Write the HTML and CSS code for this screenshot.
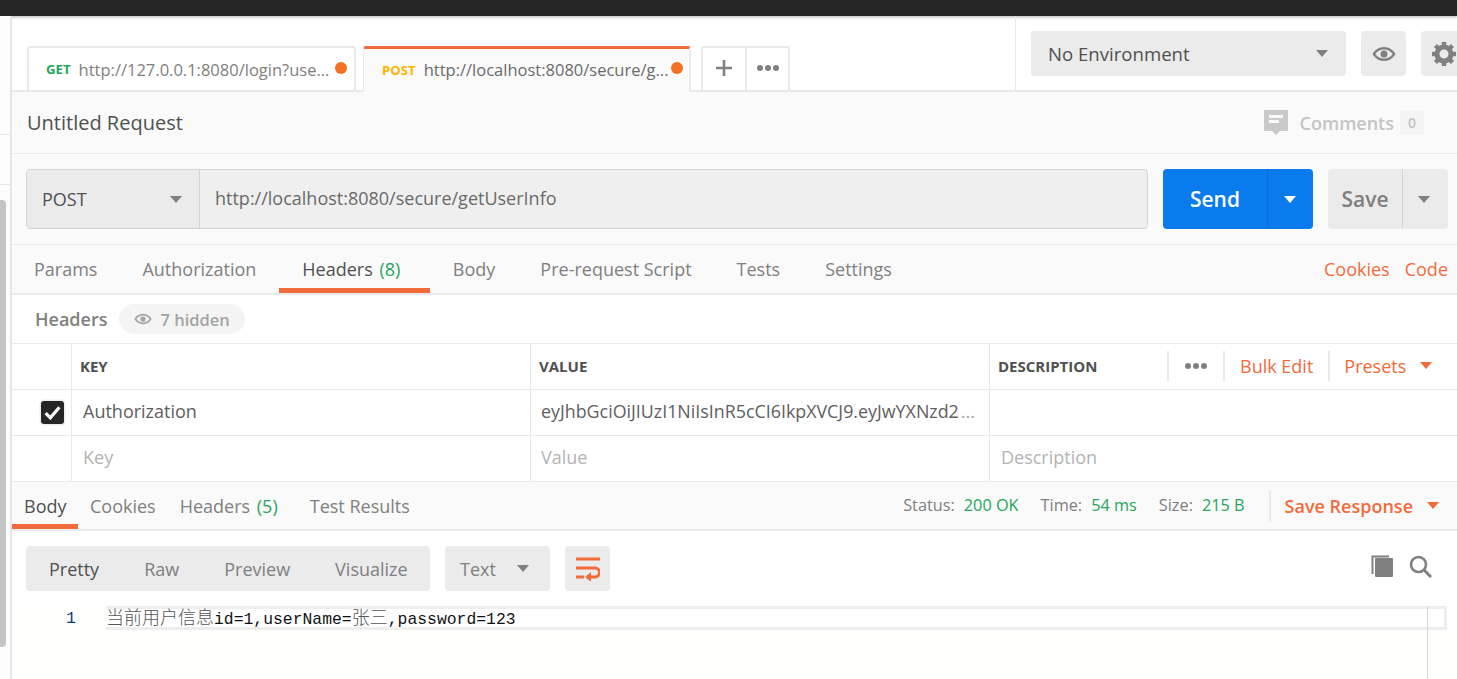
FILE: index.html
```html
<!DOCTYPE html>
<html lang="zh">
<head>
<meta charset="utf-8">
<title>Postman</title>
<link rel="stylesheet" href="styles.css">
</head>
<body>
<div class="topbar"></div>
<div class="app">
  <aside class="sidebar">
    <div class="side-a"></div>
    <div class="side-b"></div>
    <div class="thumb"></div>
  </aside>
  <main class="main">
    <section class="tabbar">
      <div class="tabs">
        <div class="tab">
          <span class="verb get">GET</span><span class="tab-url">http://127.0.0.1:8080/login?use...</span><i class="dot"></i>
        </div>
        <div class="tab active">
          <span class="verb post">POST</span><span class="tab-url">http://localhost:8080/secure/g...</span><i class="dot"></i>
        </div>
        <div class="tab-tools">
          <div class="tool plus"><svg width="20" height="20" viewBox="0 0 20 20"><path d="M10 2v16M2 10h16" stroke="#808080" stroke-width="2.6"/></svg></div>
          <div class="tool"><svg class="dots" width="24" height="8" viewBox="0 0 24 8"><circle cx="4" cy="4" r="3"/><circle cx="12" cy="4" r="3"/><circle cx="20" cy="4" r="3"/></svg></div>
        </div>
      </div>
      <div class="env">
        <div class="env-select"><span>No Environment</span><i class="caret"></i></div>
        <div class="env-btn"><svg width="24" height="16" viewBox="0 0 24 16"><path fill="#808080" fill-rule="evenodd" d="M12 1C7 1 2.800 3.800 0.500 8 2.800 12.200 7 15 12 15s9.200-2.800 11.500-7C21.200 3.800 17 1 12 1zm0 2.400c3.600 0 6.800 1.800 8.800 4.600-2 2.800-5.200 4.600-8.800 4.600S5.200 10.800 3.200 8c2-2.800 5.200-4.600 8.800-4.600zM12 4.500a3.500 3.500 0 1 0 0 7 3.500 3.500 0 0 0 0-7z"/></svg></div>
        <div class="env-btn"><svg width="26" height="26" viewBox="0 0 26 26"><circle cx="13" cy="13" r="7" fill="none" stroke="#808080" stroke-width="5"/><path stroke="#808080" stroke-width="4.500" d="M13 1v5M13 20v5M1 13h5M20 13h5M4.500 4.500l3.500 3.500M18 18l3.500 3.500M4.500 21.500L8 18M18 8l3.500-3.500"/></svg></div>
      </div>
    </section>

    <section class="title-row">
      <h1>Untitled Request</h1>
      <div class="comments">
        <svg width="24" height="25" viewBox="0 0 24 25"><path fill="#c9c9c9" d="M1 0h22a1 1 0 0 1 1 1v19a1 1 0 0 1-1 1h-7l-4 4-4-4H1a1 1 0 0 1-1-1V1a1 1 0 0 1 1-1z"/><path fill="#fafafa" d="M5 5h14v3H5zM5 10h10v3H5z"/></svg>
        <span class="comments-label">Comments</span><span class="count">0</span>
      </div>
    </section>

    <section class="url-row">
      <div class="url-box">
        <div class="method"><span>POST</span><i class="caret"></i></div>
        <div class="url">http://localhost:8080/secure/getUserInfo</div>
      </div>
      <div class="send"><span class="send-label">Send</span><span class="send-arrow"><i class="caret white"></i></span></div>
      <div class="save"><span class="save-label">Save</span><span class="save-arrow"><i class="caret"></i></span></div>
    </section>

    <nav class="req-tabs">
      <span class="rt first">Params</span>
      <span class="rt">Authorization</span>
      <span class="rt on">Headers <b class="ok count-tag">(8)</b></span>
      <span class="rt">Body</span>
      <span class="rt">Pre-request Script</span>
      <span class="rt">Tests</span>
      <span class="rt">Settings</span>
      <span class="links"><span>Cookies</span><span>Code</span></span>
    </nav>

    <section class="hdr-row">
      <span class="hdr-title">Headers</span>
      <span class="pill"><svg width="18" height="12" viewBox="0 0 24 16"><path fill="#a3a3a3" fill-rule="evenodd" d="M12 1C7 1 2.800 3.800 0.500 8 2.800 12.200 7 15 12 15s9.200-2.800 11.500-7C21.200 3.800 17 1 12 1zm0 2.400c3.600 0 6.800 1.800 8.800 4.600-2 2.800-5.200 4.600-8.800 4.600S5.200 10.800 3.200 8c2-2.800 5.200-4.600 8.800-4.600zM12 4.500a3.500 3.500 0 1 0 0 7 3.500 3.500 0 0 0 0-7z"/></svg>7 hidden</span>
    </section>

    <section class="table">
      <div class="row head">
        <div class="cell chk"></div>
        <div class="cell">KEY</div>
        <div class="cell">VALUE</div>
        <div class="cell desc-head">
          <span class="desc-label">DESCRIPTION</span>
          <span class="head-tools">
            <span class="ht first"><svg class="dots" width="24" height="8" viewBox="0 0 24 8"><circle cx="4" cy="4" r="3"/><circle cx="12" cy="4" r="3"/><circle cx="20" cy="4" r="3"/></svg></span>
            <span class="ht link">Bulk Edit</span>
            <span class="ht link">Presets<i class="caret orange"></i></span>
          </span>
        </div>
      </div>
      <div class="row body-row">
        <div class="cell chk"><span class="checkbox"><svg width="17" height="15" viewBox="0 0 16 14"><path d="M1.500 7.500l4.500 4.500L14.500 2" fill="none" stroke="#fff" stroke-width="3"/></svg></span></div>
        <div class="cell">Authorization</div>
        <div class="cell value"><span class="ell">eyJhbGciOiJIUzI1NiIsInR5cCI6IkpXVCJ9.eyJwYXNzd2</span><span class="more">...</span></div>
        <div class="cell"></div>
      </div>
      <div class="row body-row ph">
        <div class="cell chk"></div>
        <div class="cell">Key</div>
        <div class="cell value">Value</div>
        <div class="cell">Description</div>
      </div>
    </section>

    <nav class="res-tabs">
      <span class="rs on">Body</span>
      <span class="rs">Cookies</span>
      <span class="rs wide">Headers <b class="ok count-tag">(5)</b></span>
      <span class="rs">Test Results</span>
      <span class="stats">
        <span class="stat"><span>Status:</span><b class="ok">200 OK</b></span>
        <span class="stat"><span>Time:</span><b class="ok">54 ms</b></span>
        <span class="stat"><span>Size:</span><b class="ok">215 B</b></span>
      </span>
      <span class="save-res"><span>Save Response</span><i class="caret orange"></i></span>
    </nav>

    <section class="toolbar">
      <div class="modes">
        <span class="mode sel">Pretty</span><span class="mode">Raw</span><span class="mode">Preview</span><span class="mode">Visualize</span>
      </div>
      <div class="format"><span>Text</span><i class="caret"></i></div>
      <div class="wrap"><svg width="24" height="25" viewBox="0 0 24 25"><path fill="none" stroke="#f26b3a" stroke-width="3" d="M0 3h24M0 12h19a4 4 0 0 1 0 9h-7M0 21h8"/><path fill="#f26b3a" d="M15 16v10l-6-5z"/></svg></div>
      <div class="res-icons">
        <svg width="23" height="22" viewBox="0 0 23 22"><rect x="4" y="3" width="18" height="19" rx="1" fill="#808080"/><path fill="none" stroke="#808080" stroke-width="2" d="M1.500 19V1.500H18"/></svg>
        <svg width="23" height="23" viewBox="0 0 23 23"><circle cx="9.500" cy="9.500" r="7.500" fill="none" stroke="#808080" stroke-width="2.600"/><path d="M15 15l7 7" stroke="#808080" stroke-width="3"/></svg>
      </div>
    </section>

    <section class="code">
      <span class="gutter">1</span>
      <div class="line"><span class="cjk">当前用户信息</span>id=1,userName=<span class="cjk">张三</span>,password=123</div>
    </section>
  </main>
</div>
</body>
</html>
```
FILE: styles.css
```css
* { box-sizing: border-box; }
html, body { margin: 0; height: 100%; overflow: hidden; }
body {
  width: 1457px;
  height: 679px;
  background: #fff;
  color: #505050;
  font-family: "Open Sans", "Noto Sans", sans-serif;
  font-size: 18px;
}
.topbar { height: 16px; background: #262626; box-shadow: 0 1px 3px rgba(0,0,0,.3); position: relative; }
.app { display: flex; height: 663px; }
.sidebar { width: 12px; flex: none; background: #fcfcfc; border-right: 2px solid #e6e6e6; position: relative; }
.side-a { height: 119px; border-bottom: 1px solid #e6e6e6; }
.side-b { height: 50px; border-bottom: 1px solid #e6e6e6; }
.thumb { position: absolute; left: 0; top: 184px; width: 6px; height: 447px; background: #c4c4c4; border-radius: 0 4px 4px 0; }
.main { width: 1445px; flex: none; overflow: hidden; }

.caret { display: inline-block; width: 0; height: 0; border-left: 6px solid transparent; border-right: 6px solid transparent; border-top: 7.500px solid #808080; }
.caret.white { border-top-color: #fff; }
.caret.orange { border-top-color: #f26b3a; }
.ok { color: #26a55b; font-weight: 400; }
.count-tag { margin-left: 2px; }
.dots { fill: #808080; }

.tabbar { height: 76px; display: flex; border-bottom: 2px solid #e9e9e9; position: relative; }
.tabs { width: 1004px; flex: none; display: flex; align-items: flex-end; padding-left: 15px; border-right: 1px solid #e9e9e9; }
.tab { width: 329px; height: 44px; display: flex; align-items: center; padding: 0 7px 0 17px; border: 2px solid #e9e9e9; border-bottom: 0; border-radius: 3px 3px 0 0; background: #fff; margin-right: 7px; font-size: 16.500px; white-space: nowrap; }
.tab.active { width: 328px; height: 46px; margin-bottom: -2px; margin-right: 10px; padding: 0 6px 2px 18px; background: #fafafa; border-top: 3px solid #f26b3a; border-left: 1px solid #e9e9e9; position: relative; }
.verb { font-size: 13.200px; font-weight: 700; margin-right: 8px; }
.get { color: #26a55b; }
.post { color: #ffb400; }
.tab-url { flex: 1; color: #808080; overflow: hidden; }
.active .tab-url { color: #6a6a6a; }
.dot { width: 12px; height: 12px; border-radius: 50%; background: #f47023; flex: none; margin-bottom: 3px; }
.tab-tools { display: flex; height: 44px; border: 2px solid #e9e9e9; border-bottom: 0; border-radius: 3px 3px 0 0; }
.tool { width: 41px; display: flex; align-items: center; justify-content: center; padding-bottom: 2px; }
.tool.plus { width: 44px; border-right: 2px solid #e9e9e9; }
.env { flex: none; display: flex; gap: 15px; padding: 15px 0 0 15px; }
.env-select { width: 315px; height: 45px; background: #ebebeb; border-radius: 4px; display: flex; align-items: center; justify-content: space-between; padding: 0 18px 0 17px; font-weight: 500; font-size: 18.600px; color: #505050; }
.env-btn { width: 45px; height: 45px; flex: none; background: #ebebeb; border-radius: 4px; display: flex; align-items: center; justify-content: center; }

.title-row { height: 62px; background: #fafafa; border-bottom: 1px solid #e9e9e9; display: flex; align-items: center; justify-content: space-between; padding: 0 33px 0 15px; }
h1 { margin: 0; font-size: 20px; font-weight: 500; color: #505050; }
.comments { display: flex; align-items: center; color: #c4c4c4; font-weight: 600; }
.comments-label { margin-left: 12px; margin-right: 6px; }
.count { width: 24px; height: 24px; background: #f4f4f4; border-radius: 2px; font-size: 14px; display: flex; align-items: center; justify-content: center; }

.url-row { height: 91px; background: #fafafa; border-bottom: 1px solid #e9e9e9; padding: 15px 0 0 14px; display: flex; }
.url-box { width: 1122px; height: 60px; display: flex; border: 1px solid #d4d4d4; border-radius: 4px; background: #efefef; }
.method { width: 173px; flex: none; background: #ebebeb; border-right: 1px solid #d4d4d4; border-radius: 3px 0 0 3px; display: flex; align-items: center; justify-content: space-between; padding: 0 17px 0 15px; font-weight: 500; }
.url { padding: 0 15px; line-height: 56px; color: #6a6a6a; }
.send { margin-left: 15px; width: 150px; height: 60px; background: #097bed; color: #fff; border-radius: 4px; display: flex; font-size: 21px; font-weight: 600; }
.send-label { width: 105px; text-align: center; line-height: 60px; border-right: 1px solid #0a6ed0; }
.send-arrow { flex: 1; display: flex; align-items: center; justify-content: center; padding-right: 2px; }
.save { margin-left: 15px; width: 120px; height: 60px; background: #ebebeb; color: #808080; border-radius: 4px; display: flex; font-size: 21px; font-weight: 600; }
.save-label { width: 75px; text-align: center; line-height: 60px; border-right: 1px solid #d4d4d4; }
.save-arrow { flex: 1; display: flex; align-items: center; justify-content: center; padding-right: 4px; }

.req-tabs { height: 50px; background: #fafafa; border-bottom: 2px solid #e9e9e9; display: flex; position: relative; }
.rt { padding: 12px 22.500px 0; color: #808080; height: 48px; white-space: nowrap; }
.rt.first { padding-left: 22px; }
.rt.on { color: #505050; border-bottom: 5px solid #f26b3a; padding-left: 23.500px; padding-right: 30px; }
.links { margin-left: auto; display: flex; gap: 15px; color: #f26b3a; padding: 12px 9px 0 0; }

.hdr-row { height: 49px; border-bottom: 1px solid #e9e9e9; display: flex; align-items: center; padding-left: 23px; }
.hdr-title { font-weight: 600; color: #808080; }
.pill { margin-left: 12px; height: 30px; padding: 0 15px; background: #f4f4f4; border-radius: 15px; display: inline-flex; align-items: center; gap: 8px; color: #a3a3a3; font-weight: 600; font-size: 16.500px; }

.row { display: grid; grid-template-columns: 60px 459px 459px 1fr; border-bottom: 1px solid #e9e9e9; height: 46px; }
.cell { border-right: 1px solid #e9e9e9; display: flex; align-items: center; padding: 0 11px 4px; white-space: nowrap; overflow: hidden; color: #606060; }
.cell:last-child { border-right: 0; }
.cell.value { padding-left: 10px; }
.cell.chk { justify-content: flex-end; padding: 0 7px 0 0; }
.head .cell { font-size: 15px; font-weight: 700; color: #505050; padding: 0 0 2px 8px; }
.head .desc-head { padding-right: 0; overflow: visible; }
.desc-label { width: 169px; flex: none; }
.head-tools { display: flex; align-items: center; height: 30px; }
.ht { height: 30px; display: flex; align-items: center; border-left: 2px solid #e9e9e9; }
.ht.first { padding: 0 15px; }
.ht.link { color: #f26b3a; font-size: 18px; font-weight: 400; padding: 0 15px; }
.ht.link:last-child { padding-left: 14px; padding-right: 0; }
.ht .caret { margin-left: 14px; }
.checkbox { width: 23px; height: 23px; background: #262626; border-radius: 3px; box-shadow: 0 0 0 1.500px #eee; display: flex; align-items: center; justify-content: center; }
.ell { color: #606060; flex: none; font-size: 17.850px; }
.more { color: #a3a3a3; margin-left: 2px; }
.ph .cell { color: #b3b3b3; }

.res-tabs { height: 49px; background: #fafafa; border-bottom: 2px solid #e9e9e9; display: flex; position: relative; }
.rs { padding: 12px 12px 0; color: #808080; height: 47px; white-space: nowrap; }
.rs.wide { padding-right: 20px; }
.rs.on { color: #505050; border-bottom: 5px solid #f26b3a; margin-left: -1px; padding: 12px 11.500px 0 13px; }
.stats { margin-left: auto; display: flex; gap: 22px; padding-top: 12px; font-size: 16.300px; color: #808080; }
.stat { display: flex; gap: 9px; }
.save-res { margin-left: 24px; margin-top: 8px; height: 31px; display: flex; align-items: center; border-left: 2px solid #e9e9e9; padding: 0 18px 0 14px; color: #f26b3a; font-weight: 600; }
.save-res .caret { margin-left: 14px; }

.toolbar { display: flex; align-items: flex-start; padding: 15px 0 0 14px; height: 75px; }
.modes { width: 404px; height: 45px; background: #ebebeb; border-radius: 4px; display: flex; align-items: center; padding-left: 23px; gap: 45px; color: #808080; }
.mode.sel { color: #505050; }
.format { margin-left: 15px; width: 105px; height: 45px; background: #ebebeb; border-radius: 4px; display: flex; align-items: center; justify-content: space-between; padding: 0 21px 0 15px; color: #808080; }
.wrap { margin-left: 15px; width: 45px; height: 45px; background: #ebebeb; border-radius: 4px; display: flex; align-items: center; justify-content: center; }
.res-icons { margin-left: auto; display: flex; gap: 15px; padding: 9px 25px 0 0; }

.code { display: flex; position: relative; height: 73px; background: #fffffd; }
.gutter { width: 94px; flex: none; padding-left: 54px; font-family: "Liberation Mono", monospace; font-size: 16.500px; color: #0a3a86; line-height: 26px; }
.line { width: 1341px; height: 24px; border: 3px solid #eee; border-left: 0; font-family: "Liberation Mono", "Noto Sans CJK SC", monospace; font-size: 16.400px; line-height: 14px; color: #111; white-space: nowrap; background: #fff; position: relative; }
.line::after { content: ""; position: absolute; left: 1321px; top: -3px; bottom: -52px; width: 1px; background: #d4d4d4; }
.cjk { font-family: "Noto Sans CJK SC", sans-serif; font-size: 18px; line-height: 14px; color: #555; font-weight: 300; }
```
